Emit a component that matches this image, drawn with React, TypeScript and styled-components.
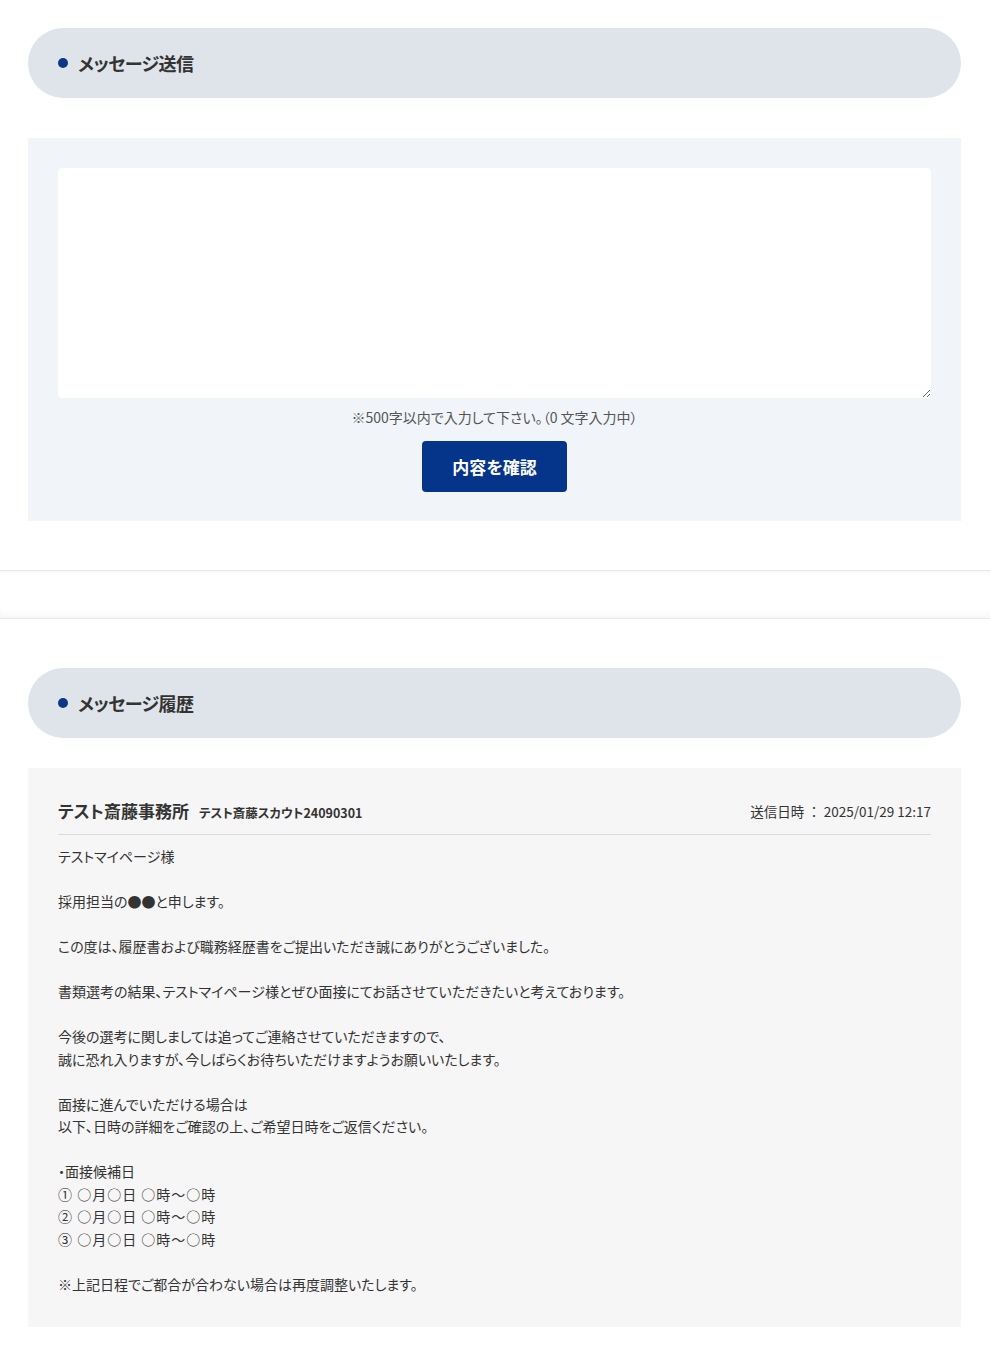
import React from "react";
import styled, { createGlobalStyle } from "styled-components";

const Global = createGlobalStyle`
  html, body { margin: 0; padding: 0; background: #fff; }
  body {
    font-family: "Noto Sans CJK JP", "Noto Sans", sans-serif;
    color: #333;
    font-feature-settings: "palt";
  }
  * { box-sizing: border-box; }
`;

const Page = styled.div`
  width: 990px;
  display: flex;
  flex-direction: column;
`;

const Section = styled.section<{ $top: number; $bottom: number; $gap: number }>`
  padding: ${(p) => p.$top}px 29px ${(p) => p.$bottom}px 28px;
  display: flex;
  flex-direction: column;
  gap: ${(p) => p.$gap}px;
`;

const Divider = styled.div`
  height: 49px;
  border-top: 1px solid #eaeaea;
  border-bottom: 1px solid #eaeaea;
  box-shadow: inset 0 3px 4px -2px rgba(0, 0, 0, 0.05),
    inset 0 -10px 10px -8px rgba(0, 0, 0, 0.05);
`;

const HeadingPill = styled.h2`
  margin: 0;
  height: 70px;
  border-radius: 35px;
  background: #dfe4eb;
  display: flex;
  align-items: center;
  gap: 10px;
  padding-left: 30px;
  font-size: 18px;
  font-weight: 700;
  color: #333;
  letter-spacing: -0.5px;
`;

const Dot = styled.span`
  width: 10px;
  height: 10px;
  border-radius: 50%;
  background: #0a3786;
  display: inline-block;
`;

const FormBox = styled.div`
  background: #f1f4f8;
  padding: 30px 30px 29px;
  display: flex;
  flex-direction: column;
  align-items: center;
`;

const TextArea = styled.textarea`
  width: 100%;
  height: 230px;
  border: none;
  border-radius: 4px;
  background: #fff;
  resize: vertical;
  font-family: inherit;
  font-size: 14px;
  padding: 10px;
  outline: none;
`;

const Note = styled.p`
  margin: 7px 0 0;
  font-size: 14px;
  line-height: 24px;
  color: #555;
`;

const PrimaryButton = styled.button`
  margin-top: 12px;
  width: 145px;
  height: 51px;
  border: none;
  border-radius: 4px;
  background: #04358a;
  color: #fff;
  font-family: inherit;
  font-feature-settings: "palt";
  font-size: 17px;
  font-weight: 700;
  cursor: pointer;
`;

const HistoryBox = styled.article`
  background: #f6f6f6;
  padding: 30px 30px 32px;
`;

const MessageHeader = styled.header`
  display: flex;
  align-items: center;
  justify-content: space-between;
  padding-bottom: 10px;
  border-bottom: 1px solid #dcdcdc;
`;

const Sender = styled.div`
  display: flex;
  align-items: baseline;
  gap: 10px;
`;

const SenderName = styled.span`
  font-size: 17px;
  font-weight: 700;
  line-height: 26px;
`;

const SenderSub = styled.span`
  font-size: 12.5px;
  font-weight: 700;
`;

const SentAt = styled.span`
  font-size: 13.5px;
  color: #333;
  font-feature-settings: normal;
`;

const Body = styled.div`
  margin-top: 10px;
  font-size: 14px;
  line-height: 22.5px;
  color: #333;
  display: flex;
  flex-direction: column;
  gap: 22.5px;
`;

const Para = styled.p<{ $plain?: boolean }>`
  margin: 0;
  white-space: pre-line;
  font-feature-settings: ${(p) => (p.$plain ? "normal" : "\"palt\"")};
  letter-spacing: ${(p) => (p.$plain ? "1px" : "0")};
`;

const Candidates = styled.div`
  display: flex;
  flex-direction: column;
`;

const paragraphs = [
  "テストマイページ様",
  "採用担当の●●と申します。",
  "この度は、履歴書および職務経歴書をご提出いただき誠にありがとうございました。",
  "書類選考の結果、テストマイページ様とぜひ面接にてお話させていただきたいと考えております。",
  "今後の選考に関しましては追ってご連絡させていただきますので、\n誠に恐れ入りますが、今しばらくお待ちいただけますようお願いいたします。",
  "面接に進んでいただける場合は\n以下、日時の詳細をご確認の上、ご希望日時をご返信ください。",
];

const candidates = ["① ○月○日 ○時～○時", "② ○月○日 ○時～○時", "③ ○月○日 ○時～○時"];

export default function App() {
  return (
    <Page>
      <Global />
      <Section $top={28} $bottom={49} $gap={40}>
        <HeadingPill>
          <Dot />
          メッセージ送信
        </HeadingPill>
        <FormBox>
          <TextArea />
          <Note>※500字以内で入力して下さい。（0 文字入力中）</Note>
          <PrimaryButton>内容を確認</PrimaryButton>
        </FormBox>
      </Section>
      <Divider />
      <Section $top={49} $bottom={34} $gap={30}>
        <HeadingPill>
          <Dot />
          メッセージ履歴
        </HeadingPill>
        <HistoryBox>
          <MessageHeader>
            <Sender>
              <SenderName>テスト斎藤事務所</SenderName>
              <SenderSub>テスト斎藤スカウト24090301</SenderSub>
            </Sender>
            <SentAt>送信日時 ： 2025/01/29 12:17</SentAt>
          </MessageHeader>
          <Body>
            {paragraphs.map((t, i) => (
              <Para key={i}>{t}</Para>
            ))}
            <Candidates>
              <Para>・面接候補日</Para>
              {candidates.map((c) => (
                <Para key={c} $plain>
                  {c}
                </Para>
              ))}
            </Candidates>
            <Para>※上記日程でご都合が合わない場合は再度調整いたします。</Para>
          </Body>
        </HistoryBox>
      </Section>
    </Page>
  );
}
